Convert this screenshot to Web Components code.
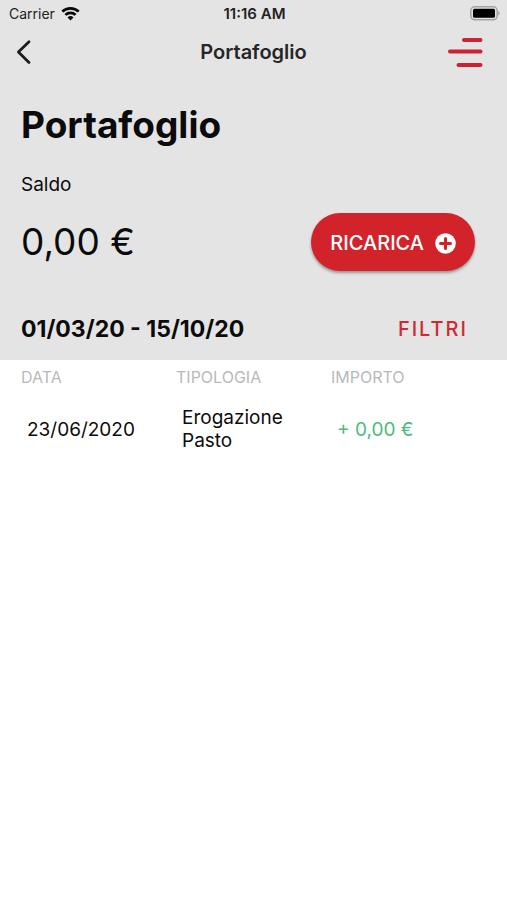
<!DOCTYPE html>
<html lang="it">
<head>
<meta charset="utf-8">
<meta name="viewport" content="width=device-width, initial-scale=1">
<title>Portafoglio</title>
<style>
body { margin: 0; background: #fff; color: #0b0b0c; font-family: Inter, "Liberation Sans", sans-serif; }
</style>
</head>
<body>
<wallet-page></wallet-page>

<template id="status-bar">
<style>
:host { display: grid; grid-template-columns: 1fr auto 1fr; align-items: center; height: 26px; padding: 0 7px 2px 9px; font-size: 14px; color: #222; }
.carrier { display: flex; align-items: center; gap: 6px; }
.time { font-size: 15px; font-weight: 600; }
.battery { justify-self: end; }
svg { display: block; }
</style>
<span class="carrier"><span>Carrier</span>
<svg width="19" height="15" viewBox="0 0 19 15" fill="none" stroke="#080808" stroke-width="2.7" aria-hidden="true"><path d="M1.3 5.6a11.8 11.8 0 0 1 16.4 0M4.4 8.9a7.3 7.3 0 0 1 10.2 0"/><path d="M9.5 14.4 6.5 11.4a4.3 4.3 0 0 1 6 0z" fill="#080808" stroke="none"/></svg></span>
<span class="time">11:16 AM</span>
<svg class="battery" width="30" height="15" viewBox="0 0 30 15" aria-hidden="true"><rect x=".8" y=".8" width="26.4" height="13" rx="4" fill="none" stroke="#a3a3a5" stroke-width="1.5"/><rect x="3" y="2.8" width="22" height="9" rx="1.500" fill="#000"/><path d="M28.2 5.2q3.2 2.1 0 4.2z" fill="#a3a3a5"/></svg>
</template>

<template id="nav-bar">
<style>
:host { display: grid; grid-template-columns: 1fr auto 1fr; align-items: center; height: 48px; padding: 0 15px; }
h2 { margin: 0; font-size: 20px; line-height: 24px; font-weight: 600; color: #262628; }
button { display: block; padding: 0; border: 0; background: none; cursor: pointer; }
.menu { justify-self: end; margin-right: 8px; }
svg { display: block; }
</style>
<button type="button" aria-label="Indietro"><svg width="18" height="26" viewBox="0 0 18 26" fill="none" stroke="#1d1d1f" stroke-width="2.8" stroke-linecap="round" stroke-linejoin="round"><path d="M14 2.8 3.4 13 14 23.6"/></svg></button>
<h2><slot></slot></h2>
<button type="button" class="menu" aria-label="Menu"><svg width="38" height="32" viewBox="0 0 38 32" fill="none" stroke="#cb2333" stroke-width="4" stroke-linecap="round"><path d="M18 4h16.5M4 15.5h30.5M12.500 29h22"/></svg></button>
</template>

<template id="balance-panel">
<style>
:host { display: block; padding: 26px 32px 0 21px; }
h1 { margin: 0; font-size: 37px; line-height: 46px; font-weight: 700; }
p { margin: 0; }
.label { margin-top: 25px; font-size: 19px; line-height: 24px; }
.row { display: flex; justify-content: space-between; align-items: center; margin-top: 16px; }
.amount { font-size: 37px; line-height: 46px; }
</style>
<h1><slot name="title"></slot></h1>
<p class="label"><slot name="label"></slot></p>
<div class="row"><p class="amount"><slot name="amount"></slot></p><slot name="action"></slot></div>
</template>

<template id="top-up-button">
<style>
:host { display: block; }
button { display: flex; align-items: center; gap: 11px; height: 58px; padding: 2px 19px 0; border: 0; border-radius: 29px; background: #d2232a; color: #fff; font: 500 20px/24px Inter, "Liberation Sans", sans-serif; box-shadow: 0 2px 3px rgba(0,0,0,.35); cursor: pointer; }
svg { display: block; }
</style>
<button type="button"><slot></slot><svg width="21" height="21" viewBox="0 0 21 21" aria-hidden="true"><circle cx="10.500" cy="10.500" r="10.300" fill="#fff"/><path d="M10.500 5.500v10M5.500 10.500h10" stroke="#d2232a" stroke-width="3" stroke-linecap="round"/></svg></button>
</template>

<template id="period-bar">
<style>
:host { display: flex; justify-content: space-between; align-items: center; padding: 46px 39px 19px 21px; }
h3 { margin: 0; font-size: 23px; line-height: 24px; font-weight: 700; }
button { padding: 0; border: 0; background: none; color: #cf2b31; font: 500 20px/24px Inter, "Liberation Sans", sans-serif; letter-spacing: 2px; cursor: pointer; }
</style>
<h3><slot></slot></h3><button type="button">FILTRI</button>
</template>

<template id="movement-table">
<style>
:host { display: block; padding: 0 21px; }
table { width: 100%; border-collapse: collapse; table-layout: fixed; text-align: left; }
th { padding: 8px 0; font-size: 16px; line-height: 18px; font-weight: 400; color: #b9b9bb; }
td { padding: 12px 6px; font-size: 19px; line-height: 23px; }
.credit { color: #4dbb7b; }
</style>
<table>
<thead><tr><th scope="col">DATA</th><th scope="col">TIPOLOGIA</th><th scope="col">IMPORTO</th></tr></thead>
<tbody><tr><td>23/06/2020</td><td>Erogazione Pasto</td><td class="credit">+ 0,00 €</td></tr></tbody>
</table>
</template>

<template id="wallet-page">
<style>
:host { display: block; }
header { background: #e4e4e4; }
</style>
<header>
<status-bar></status-bar>
<nav-bar>Portafoglio</nav-bar>
<balance-panel>
<span slot="title">Portafoglio</span>
<span slot="label">Saldo</span>
<span slot="amount">0,00 €</span>
<top-up-button slot="action">RICARICA</top-up-button>
</balance-panel>
<period-bar>01/03/20 - 15/10/20</period-bar>
</header>
<main><movement-table></movement-table></main>
</template>

<script>
class TemplateElement extends HTMLElement {
  constructor() {
    super();
    const template = document.getElementById(this.localName);
    this.attachShadow({ mode: "open" }).append(template.content.cloneNode(true));
  }
}
for (const name of ["status-bar", "nav-bar", "top-up-button", "balance-panel", "period-bar", "movement-table", "wallet-page"]) {
  customElements.define(name, class extends TemplateElement {});
}
</script>
</body>
</html>
